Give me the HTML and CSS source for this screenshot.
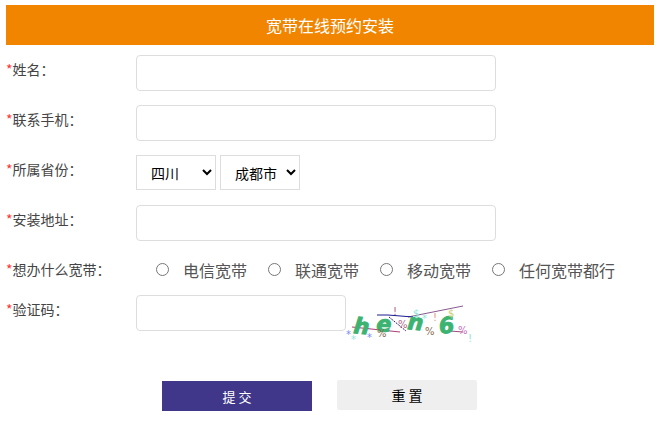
FILE: index.html
```html
<!DOCTYPE html>
<html>
    <head>
        <meta charset="utf-8">
        <title>宽带在线预约安装</title>
        <link rel="stylesheet" href="styles.css">
    </head>
    <body>
        <div class="title">宽带在线预约安装</div>
        <form class="form">
            <div class="row">
                <label class="name"><i>*</i>姓名：</label>
                <input class="text" type="text">
            </div>
            <div class="row">
                <label class="name"><i>*</i>联系手机：</label>
                <input class="text" type="text">
            </div>
            <div class="row">
                <label class="name"><i>*</i>所属省份：</label>
                <select class="prov"><option>四川</option></select>
                <select class="city"><option>成都市</option></select>
            </div>
            <div class="row">
                <label class="name"><i>*</i>安装地址：</label>
                <input class="text" type="text">
            </div>
            <div class="row row-radio">
                <label class="name"><i>*</i>想办什么宽带：</label>
                <label class="radio"><input type="radio" name="kd">电信宽带</label>
                <label class="radio"><input type="radio" name="kd">联通宽带</label>
                <label class="radio"><input type="radio" name="kd">移动宽带</label>
                <label class="radio"><input type="radio" name="kd">任何宽带都行</label>
            </div>
            <div class="row row-code">
                <label class="name"><i>*</i>验证码：</label>
                <input class="text code" type="text">
                <svg class="captcha" width="125" height="40" viewBox="0 0 125 40">
                    <path d="M6 22 L54 27" stroke="#b03a78" fill="none"/>
                    <path d="M62 12 L117 1" stroke="#8a5a90" fill="none"/>
                    <path d="M31 10 L42 10 L67 12" stroke="#1a1a90" fill="none"/>
                    <path d="M43 12 L60 26" stroke="#30207a" stroke-dasharray="2 1" fill="none"/>
                    <path d="M104 26 L117 27" stroke="#a04a80" fill="none"/>
                    <text class="cap-l" x="7" y="28" transform="rotate(6 7 28)">h</text>
                    <text class="cap-l" x="30" y="26" transform="rotate(4 30 26)">e</text>
                    <text class="cap-l" x="61" y="24" transform="rotate(6 61 24)">n</text>
                    <text class="cap-l" x="94" y="29" transform="rotate(-8 94 29)">6</text>
                    <text class="cap-s cap-a" x="0" y="33">*</text>
                    <text class="cap-s cap-b" x="5" y="38">*</text>
                    <text class="cap-s cap-a" x="21" y="36">*</text>
                    <text class="cap-s cap-e" x="31" y="32">%</text>
                    <text class="cap-s cap-c" x="52" y="23">%</text>
                    <text class="cap-s cap-c" x="47" y="10">!</text>
                    <text class="cap-s cap-b" x="67" y="12">$</text>
                    <text class="cap-s cap-b" x="76" y="17">*</text>
                    <text class="cap-s cap-f" x="87" y="16">!</text>
                    <text class="cap-s cap-e" x="79" y="30">%</text>
                    <text class="cap-s cap-g" x="102" y="12">$</text>
                    <text class="cap-s cap-d" x="112" y="29">%</text>
                    <text class="cap-s cap-b" x="122" y="37">!</text>
                </svg>
            </div>
            <div class="btns">
                <button class="btn-submit" type="button">提 交</button>
                <button class="btn-reset" type="button">重 置</button>
            </div>
        </form>
    </body>
</html>
```

FILE: styles.css
```css
body {
    margin: 0;
    padding: 5px 5px 0 6px;
    font-family: "Noto Sans CJK SC", "Liberation Sans", sans-serif;
    font-size: 14px;
    color: #444;
    background: #fff;
}
.title {
    height: 40px;
    line-height: 40px;
    background: #f28500;
    color: #fff;
    font-size: 16px;
    text-align: center;
}
.form {
    padding-top: 10px;
}
.row {
    display: flex;
    align-items: flex-start;
    height: 50px;
}
.name {
    width: 130px;
    flex: none;
    line-height: 28px;
}
.name i {
    font-style: normal;
    color: #f33;
}
.text {
    box-sizing: border-box;
    width: 360px;
    height: 36px;
    border: 1px solid #ddd;
    border-radius: 4px;
    background: #fff;
    outline: none;
}
select {
    box-sizing: border-box;
    height: 35px;
    border: 1px solid #ddd;
    background: #fff;
    color: #000;
    font-family: inherit;
    font-size: 14px;
    padding-left: 10px;
    border-radius: 0;
}
.prov {
    width: 80px;
    margin-right: 4px;
}
.city {
    width: 80px;
}
.row-radio {
    height: 40px;
}
.row-radio .name {
    width: 129px;
}
.radio {
    display: flex;
    align-items: center;
    height: 29px;
    margin-left: 21px;
    font-size: 16px;
    color: #555;
}
.radio input {
    width: 13px;
    height: 13px;
    margin: 0 14px 0 0;
}
.row-code {
    height: 85px;
}
.code {
    width: 210px;
}
.captcha {
    flex: none;
    margin-top: 10px;
}
.cap-l {
    font-family: "DejaVu Sans", sans-serif;
    font-size: 22px;
    font-weight: bold;
    font-style: italic;
    fill: #3cb371;
    stroke: #3cb371;
    stroke-width: 1px;
}
.cap-s {
    font-family: "DejaVu Sans", sans-serif;
    font-size: 10px;
}
.cap-a { fill: #7a8cf0; }
.cap-b { fill: #8fe8d8; }
.cap-c { fill: #b06a90; }
.cap-d { fill: #c070c0; }
.cap-e { fill: #8a6a50; }
.cap-f { fill: #e0a080; }
.cap-g { fill: #c8d070; }
.btns {
    display: flex;
    align-items: flex-start;
    padding-left: 156px;
}
button {
    font-family: inherit;
    border: 0;
    cursor: pointer;
}
.btn-submit {
    width: 150px;
    height: 30px;
    margin-top: 1px;
    margin-right: 25px;
    background: #40378a;
    color: #fff;
    font-size: 13px;
}
.btn-reset {
    width: 140px;
    height: 30px;
    background: #efefef;
    color: #000;
    border-radius: 2px;
    font-size: 14px;
}
```
